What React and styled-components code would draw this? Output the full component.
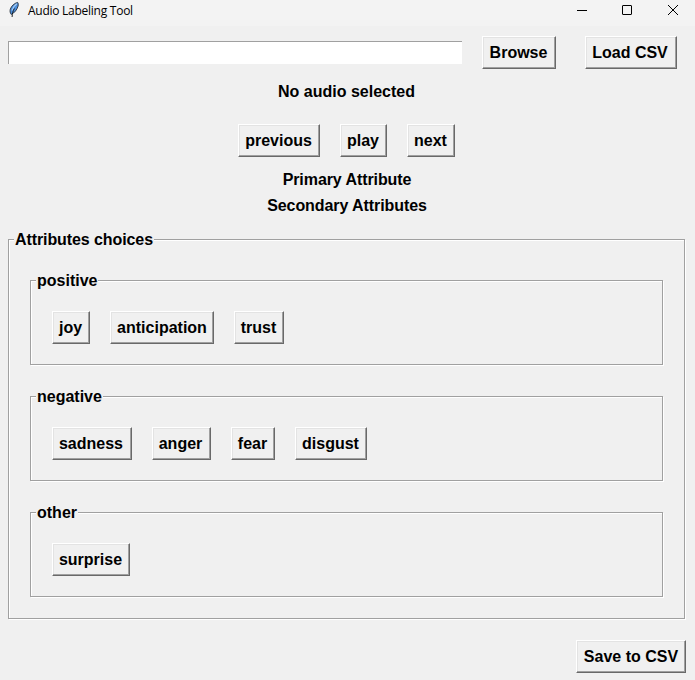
import React from "react";
import styled, { createGlobalStyle } from "styled-components";

const GlobalStyle = createGlobalStyle`
  * { box-sizing: border-box; }
  body {
    margin: 0;
    background: #f0f0f0;
    color: #000;
    font: bold 16px/18px "Liberation Sans", Arial, sans-serif;
  }
`;

const Window = styled.div`
  width: 695px;
  height: 680px;
  overflow: hidden;
  display: flex;
  flex-direction: column;
  background: #f0f0f0;
`;

const TitleBar = styled.header`
  height: 26px;
  flex: none;
  display: flex;
  align-items: flex-start;
  padding-left: 8px;
  background: #f3f3f3;
`;

const Title = styled.h1`
  margin: 3px 0 0 8px;
  flex: 1;
  font: 400 12px/16px "Open Sans", "Noto Sans", sans-serif;
  letter-spacing: -0.26px;
`;

const WindowControls = styled.div`
  display: flex;
  gap: 34px;
  padding: 4px 16px 0 0;
  svg { display: block; }
`;

const FileRow = styled.div`
  display: flex;
  align-items: flex-start;
  padding: 10px 0 0 8px;
`;

const PathEntry = styled.input`
  width: 454px;
  height: 23px;
  margin: 5px 20px 0 0;
  padding: 1px 2px;
  border: 0;
  border-radius: 0;
  box-shadow: inset 1px 1px #a0a0a0;
  outline: none;
  background: #fff;
  font: inherit;
`;

const Button = styled.button`
  width: ${(p) => p.$w}px;
  height: 33px;
  flex: none;
  margin: 0;
  padding: 0 ${(p) => p.$nudge || 0}px 0 0;
  border: 1px solid;
  border-color: #fff #696969 #696969 #fff;
  box-shadow: inset -1px -1px #a0a0a0, inset 1px 1px #e3e3e3;
  border-radius: 0;
  background: #f0f0f0;
  color: #000;
  font: inherit;
  white-space: nowrap;
`;

const LoadButton = styled(Button)`
  margin-left: 29px;
`;

const Status = styled.div`
  width: 693px;
  margin-top: 14px;
  text-align: center;
`;

const Transport = styled.div`
  display: flex;
  gap: 20px;
  margin: 23px 0 0 238px;
`;

const Headings = styled.div`
  display: flex;
  flex-direction: column;
  gap: 8px;
  width: 694px;
  margin-top: 14px;
  text-align: center;
  letter-spacing: -0.08px;
`;

const Frame = styled.section`
  display: flex;
  flex-direction: column;
  align-items: flex-start;
  border: 1px solid #a0a0a0;
  box-shadow: 1px 1px #fff, inset 1px 1px #fff;
`;

const OuterFrame = styled(Frame)`
  width: 677px;
  height: 380px;
  margin: 24px 0 0 8px;
`;

const InnerFrame = styled(Frame)`
  width: 633px;
  height: 85px;
`;

const Legend = styled.h2`
  height: 18px;
  margin: -9px 0 0 5px;
  padding: 0 1px;
  background: #f0f0f0;
  font: inherit;
  letter-spacing: ${(p) => (p.$tight ? "-0.09px" : "0")};
`;

const Groups = styled.div`
  display: flex;
  flex-direction: column;
  gap: 31px;
  margin: 31px 0 0 21px;
`;

const Choices = styled.div`
  display: flex;
  gap: 20px;
  margin: 21px 0 0 21px;
`;

const Footer = styled.footer`
  display: flex;
  justify-content: flex-end;
  padding: 21px 9px 0 0;
`;

const FeatherIcon = () => (
  <svg width="12" height="18" viewBox="0 0 12 18">
    <path d="M9.6 2.4C6.3 3.2 3.2 6.2 2.3 9.2 1.8 11.2 2 12.8 3.2 14.4 6.5 13 9.2 9.4 10.1 6 10.4 4.3 10.3 3.2 9.6 2.4Z" fill="#4a8ddb" stroke="#26313d" strokeWidth="0.9" />
    <path d="M8.8 3.8C7 5 5 7.5 4 10.5" stroke="#a9cff5" strokeWidth="1.1" fill="none" />
    <path d="M6.4 8.5C4.9 11 4.3 13.5 4.1 17" stroke="#111" strokeWidth="0.9" fill="none" />
  </svg>
);

const groups = [
  { name: "positive", choices: [["joy", 38, 1], ["anticipation", 104, 0], ["trust", 50, 1]] },
  { name: "negative", choices: [["sadness", 80, 2], ["anger", 59, 2], ["fear", 44, 1], ["disgust", 72, 1]] },
  { name: "other", choices: [["surprise", 78, 1]] },
];

export default function App() {
  return (
    <>
      <GlobalStyle />
      <Window>
        <TitleBar>
          <FeatherIcon />
          <Title>Audio Labeling Tool</Title>
          <WindowControls>
            <svg width="12" height="12" viewBox="0 0 12 12"><path d="M2 6.5H12" stroke="#000" /></svg>
            <svg width="12" height="12" viewBox="0 0 12 12"><rect x="1.5" y="1.5" width="9" height="9" rx="0.4" fill="none" stroke="#000" /></svg>
            <svg width="12" height="12" viewBox="0 0 12 12"><path d="M1 1L11 11M11 1L1 11" stroke="#000" /></svg>
          </WindowControls>
        </TitleBar>
        <FileRow>
          <PathEntry aria-label="CSV path" />
          <Button $w={74} $nudge={1}>Browse</Button>
          <LoadButton $w={92} $nudge={2}>Load CSV</LoadButton>
        </FileRow>
        <Status>No audio selected</Status>
        <Transport>
          <Button $w={82} $nudge={1}>previous</Button>
          <Button $w={47} $nudge={1}>play</Button>
          <Button $w={48} $nudge={1}>next</Button>
        </Transport>
        <Headings>
          <div>Primary Attribute</div>
          <div>Secondary Attributes</div>
        </Headings>
        <OuterFrame>
          <Legend $tight>Attributes choices</Legend>
          <Groups>
            {groups.map((group) => (
              <InnerFrame key={group.name}>
                <Legend>{group.name}</Legend>
                <Choices>
                  {group.choices.map(([label, width, nudge]) => (
                    <Button key={label} $w={width} $nudge={nudge}>{label}</Button>
                  ))}
                </Choices>
              </InnerFrame>
            ))}
          </Groups>
        </OuterFrame>
        <Footer>
          <Button $w={110}>Save to CSV</Button>
        </Footer>
      </Window>
    </>
  );
}
